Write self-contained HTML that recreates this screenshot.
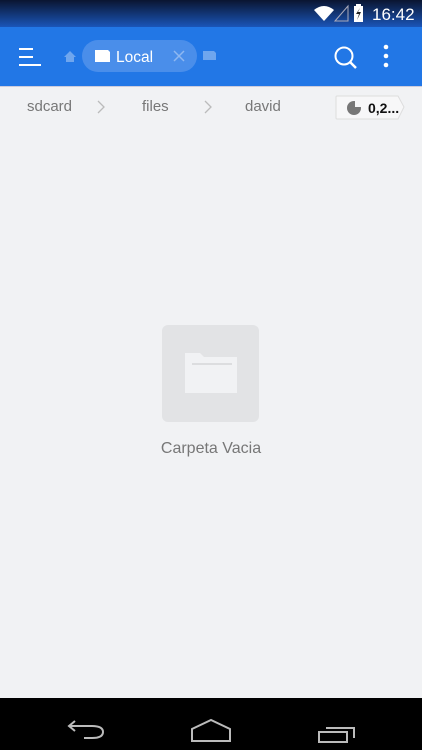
<!DOCTYPE html>
<html><head><style>
body{margin:0;width:422px;height:750px;background:#f1f2f4;font-family:"Liberation Sans",sans-serif;position:relative;overflow:hidden}
.abs{position:absolute}
</style></head><body>
<div class="abs" style="left:0;top:0;width:422px;height:27px;background:linear-gradient(#0a1530,#1a55b8)"></div>
<svg class="abs" style="left:0;top:0" width="422" height="27">
<path d="M314 10 Q324 2 334 10 L324 21 Z" fill="#fff"/>
<path d="M335 21 L348 6 L348 21 Z" fill="none" stroke="#aab" stroke-width="1"/>
<rect x="354" y="6" width="9" height="16" fill="#fff"/><rect x="356" y="4" width="5" height="2" fill="#fff"/>
<path d="M360 8 L356 14 L359 14 L357 20 L361 12 L358 12 Z" fill="#222"/>
<text x="372" y="20" fill="#fff" font-size="17" font-family="Liberation Sans">16:42</text>
</svg>
<div class="abs" style="left:0;top:27px;width:422px;height:59px;background:#2277e6"></div>
<svg class="abs" style="left:0;top:27px" width="422" height="59">
<g stroke="#fff" stroke-width="2"><line x1="19" y1="22" x2="33" y2="22"/><line x1="19" y1="30" x2="33" y2="30"/><line x1="19" y1="38" x2="41" y2="38"/></g>
<path d="M64 30 L70 24 L76 30 L74 30 L74 35 L66 35 L66 30 Z" fill="#6fa6ee"/>
<rect x="82" y="13" width="115" height="32" rx="16" fill="#4a8eea"/>
<path d="M95 23 L108 23 L110 25 L110 35 L95 35 Z" fill="#fff"/>
<text x="116" y="35" fill="#fff" font-size="15.5" font-family="Liberation Sans">Local</text>
<g stroke="#8fb8f0" stroke-width="1.5"><line x1="174" y1="24" x2="184" y2="34"/><line x1="184" y1="24" x2="174" y2="34"/></g>
<path d="M203 24 L214 24 L216 26 L216 33 L203 33 Z" fill="#6fa6ee"/>
<circle cx="344" cy="29" r="8.5" fill="none" stroke="#fff" stroke-width="2"/>
<line x1="350" y1="35" x2="356" y2="41" stroke="#fff" stroke-width="2.5"/>
<circle cx="386" cy="20" r="2.3" fill="#fff"/><circle cx="386" cy="29" r="2.3" fill="#fff"/><circle cx="386" cy="38" r="2.3" fill="#fff"/>
</svg>
<div class="abs" style="left:0;top:86px;width:422px;height:1px;background:#ccd"></div>
<div class="abs" style="left:27px;top:98px;font-size:15px;color:#777">sdcard</div>
<div class="abs" style="left:142px;top:98px;font-size:15px;color:#777">files</div>
<div class="abs" style="left:245px;top:98px;font-size:15px;color:#777">david</div>
<svg class="abs" style="left:0;top:86px" width="422" height="44">
<path d="M98 15 L104 21 L98 27 M205 15 L211 21 L205 27" fill="none" stroke="#bbb" stroke-width="1.3"/>
<path d="M337 10 L398 10 L404 21 L398 33 L337 33 Q336 33 336 32 L336 11 Q336 10 337 10Z" fill="#f7f7f8" stroke="#ddd"/>
<circle cx="354" cy="22" r="7" fill="#777"/><path d="M355 14 L355 21 L362 21 A7 7 0 0 0 355 14Z" fill="#f7f7f8"/>
<text x="368" y="27" font-size="14" font-weight="bold" fill="#111" font-family="Liberation Sans">0,2...</text>
</svg>
<div class="abs" style="left:162px;top:325px;width:97px;height:97px;background:#e2e3e5;border-radius:6px"></div>
<svg class="abs" style="left:162px;top:325px" width="97" height="97">
<path d="M23 28 L38 28 L42 32 L75 32 L75 68 L23 68 Z" fill="#f1f2f4"/>
<line x1="30" y1="39" x2="70" y2="39" stroke="#d5d6d8" stroke-width="1.5"/>
</svg>
<div class="abs" style="left:0;width:422px;top:440px;text-align:center;font-size:16px;color:#777">Carpeta Vacia</div>
<div class="abs" style="left:0;top:698px;width:422px;height:52px;background:#000"></div>
<svg class="abs" style="left:0;top:698px" width="422" height="52">
<path d="M70 28 L92 28 Q103 28 103 34 Q103 40 92 40 L84 40 M75 23 L69 28 L75 33" fill="none" stroke="#bbb" stroke-width="2"/>
<path d="M192 43 L192 31 L211 22 L230 31 L230 43 Z" fill="none" stroke="#bbb" stroke-width="2"/>
<rect x="319" y="34" width="28" height="10" fill="none" stroke="#bbb" stroke-width="2"/>
<path d="M326 30 L354 30 L354 40" fill="none" stroke="#bbb" stroke-width="2"/>
</svg>
</body></html>
